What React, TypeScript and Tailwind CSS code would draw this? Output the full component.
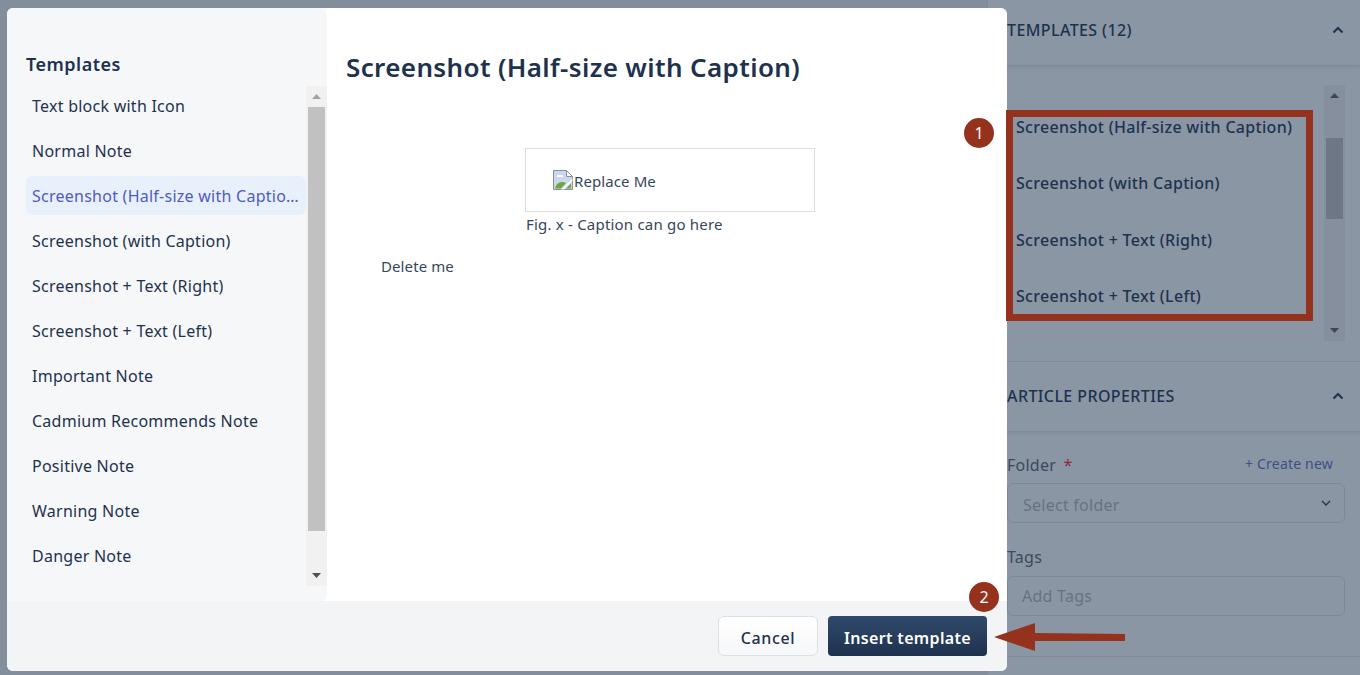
import React from "react";

const templates = [
  "Text block with Icon",
  "Normal Note",
  "Screenshot (Half-size with Caption)",
  "Screenshot (with Caption)",
  "Screenshot + Text (Right)",
  "Screenshot + Text (Left)",
  "Important Note",
  "Cadmium Recommends Note",
  "Positive Note",
  "Warning Note",
  "Danger Note",
];

function Chevron() {
  return (
    <svg width="12" height="8" viewBox="0 0 12 8" fill="none">
      <path d="M1.500 6.500 6 2l4.500 4.500" stroke="#1e324d" strokeWidth="2" />
    </svg>
  );
}

function Arrow({ up, color }: { up?: boolean; color: string }) {
  return (
    <svg width="9" height="5" viewBox="0 0 9 5">
      <path d={up ? "M0 5 4.500 0 9 5Z" : "M0 0 4.500 5 9 0Z"} fill={color} />
    </svg>
  );
}

function BrokenImage() {
  return (
    <svg width="20" height="20" viewBox="0 0 20 20" className="shrink-0">
      <path d="M0.500 0.500H13.500L19.500 6.500V19.500H0.500Z" fill="#c9d7f2" stroke="#8f8f8f" />
      <path d="M13.500 0.500V6.500H19.500Z" fill="#fff" stroke="#8f8f8f" />
      <path d="M2 18.500c1-5 6-8 11-5.500l-5 5.500Z" fill="#6fa83a" />
      <path d="M13 18.500l5-5v5Z" fill="#6fa83a" />
      <path d="M4 5h6v2H4Z" fill="#fff" />
      <path d="M8 19.500 19.500 8.500V11L11 19.500Z" fill="#fff" />
    </svg>
  );
}

function Badge({ n, className }: { n: string; className: string }) {
  return (
    <div className={`absolute w-[30px] h-[30px] rounded-full bg-[#95321e] text-white text-[16px] flex items-center justify-center ${className}`}>
      {n}
    </div>
  );
}

export default function App() {
  return (
    <div
      className="relative w-[1360px] h-[675px] overflow-hidden flex bg-[#838e9d] text-[#1e324d]"
      style={{ fontFamily: '"Noto Sans", sans-serif' }}
    >
      <div className="flex-1" />
      <aside className="w-[373px] h-full bg-[#8b96a5] border-l border-[#838e9d] flex flex-col">
        <div className="h-[66px] pl-[19px] pr-[16px] pb-[6px] flex items-center justify-between border-b border-[#7f8a99] shadow-[0_2px_3px_rgba(0,0,0,0.06)]">
          <span className="text-[16px] font-medium tracking-[0.4px]">TEMPLATES (12)</span>
          <Chevron />
        </div>
        <div className="h-[296px] pl-[28px] pr-[15px] pt-[19px] border-b border-[#7f8a99] flex justify-between">
          <div className="pt-[31px] flex flex-col gap-[34.300px] text-[16px] font-medium tracking-[0.3px] leading-[22px] whitespace-nowrap">
            <div>Screenshot (Half-size with Caption)</div>
            <div>Screenshot (with Caption)</div>
            <div>Screenshot + Text (Right)</div>
            <div>Screenshot + Text (Left)</div>
          </div>
          <div className="w-[21px] h-[256px] bg-[#858f9e] flex flex-col items-center justify-between py-[8px] relative">
            <Arrow up color="#3d4654" />
            <Arrow color="#3d4654" />
            <div className="absolute left-[2px] right-[2px] top-[53px] h-[81px] bg-[#6d7785]" />
          </div>
        </div>
        <div className="h-[70px] pl-[19px] pr-[16px] pb-[2px] flex items-center justify-between border-b border-[#7f8a99] shadow-[0_2px_3px_rgba(0,0,0,0.06)]">
          <span className="text-[16px] font-medium tracking-[0.4px]">ARTICLE PROPERTIES</span>
          <Chevron />
        </div>
        <div className="pr-[15px] pt-[21px] h-[225px] border-b border-[#7f8a99] pl-[19px]">
          <div className="flex justify-between items-center h-[24px] pr-[12px]">
            <span className="text-[16px] tracking-[0.25px] text-[#3a4a5f]">
              Folder <span className="text-[#8a2b3f] ml-[3px]">*</span>
            </span>
            <span className="text-[14px] tracking-[0.2px] text-[#3d4f86] -mt-[4px]">+ Create new</span>
          </div>
          <div className="mt-[6px] h-[40px] border border-[#7c8797] rounded-[6px] pl-[15px] pr-[13px] flex items-center justify-between text-[16px] tracking-[0.25px] text-[#67727f]">
            <span className="pt-[3px]">Select folder</span>
            <svg width="10" height="6" viewBox="0 0 10 6" fill="none">
              <path d="M1 1l4 4 4-4" stroke="#1e324d" strokeWidth="1.300" />
            </svg>
          </div>
          <div className="mt-[22px] h-[24px] flex items-center text-[16px] tracking-[0.25px] text-[#3a4a5f]">Tags</div>
          <div className="mt-[7px] h-[40px] border border-[#7c8797] rounded-[6px] pl-[14px] flex items-center text-[16px] tracking-[0.25px] text-[#67727f]">
            Add Tags
          </div>
        </div>
      </aside>

      <div className="absolute left-[7px] top-[8px] w-[1000px] h-[663px] rounded-[6px] bg-white overflow-hidden flex flex-col">
        <div className="h-[593px] flex">
          <div className="w-[320px] bg-[#f6f7f9] rounded-r-[6px] pl-[19px] pt-[43px]">
            <h2 className="text-[18px] font-semibold tracking-[0.5px] leading-[26px] h-[35px]">Templates</h2>
            <div className="flex h-[500px]">
              <ul className="w-[280px] flex flex-col gap-[6px] text-[16px] tracking-[0.25px] text-[#1e324d]">
                {templates.map((t) => (
                  <li
                    key={t}
                    className={`h-[39px] shrink-0 pl-[6px] pr-[5px] flex items-center rounded-[6px] ${
                      t.includes("Half") ? "bg-[#e8f1fb] text-[#4f5bc4]" : ""
                    }`}
                  >
                    <span className="truncate">{t}</span>
                  </li>
                ))}
              </ul>
              <div className="w-[21px] h-full bg-[#f1f1f1] relative flex flex-col items-center justify-between py-[8px]">
                <Arrow up color="#a3a3a3" />
                <Arrow color="#505050" />
                <div className="absolute left-[2px] right-[2px] top-[21px] h-[424px] bg-[#c1c1c1]" />
              </div>
            </div>
          </div>
          <div className="flex-1 pl-[19px] pt-[41px] text-[#1e324d]">
            <h1 className="text-[26px] font-semibold tracking-[0.37px] leading-[36px]">Screenshot (Half-size with Caption)</h1>
            <div className="ml-[179px] mt-[63px] w-[290px] h-[64px] border border-[#dddddd] pl-[27px] flex items-center text-[15px] tracking-[0.1px] text-[#36465c]">
              <BrokenImage />
              <span className="ml-px pt-[3px]">Replace Me</span>
            </div>
            <div className="ml-[180px] mt-[2px] h-[20px] text-[15px] tracking-[0.2px] leading-[20px] text-[#36465c]">Fig. x - Caption can go here</div>
            <div className="ml-[35px] mt-[22px] text-[15px] tracking-[0.1px] leading-[20px] text-[#36465c]">Delete me</div>
          </div>
        </div>
        <div className="flex-1 bg-[#f3f4f6] flex items-start justify-end gap-[10px] pt-[15px] pr-[20px]">
          <button className="w-[100px] h-[40px] rounded-[6px] border border-[#dde0e5] bg-gradient-to-b from-white to-[#f6f7f9] text-[16px] tracking-[0.6px] font-medium pt-[4px]">
            Cancel
          </button>
          <button className="w-[159px] h-[40px] rounded-[4px] bg-gradient-to-b from-[#30496a] to-[#1e324f] text-white text-[16px] tracking-[0.33px] font-semibold pt-[4px]">
            Insert template
          </button>
        </div>
      </div>

      <div className="absolute left-[1006px] top-[110px] w-[307px] h-[211px] border-[7px] border-[#95321e]" />
      <Badge n="1" className="left-[964px] top-[118px]" />
      <Badge n="2" className="left-[969px] top-[582px]" />
      <svg className="absolute left-[994px] top-[622px]" width="134" height="30" viewBox="0 0 134 30">
        <path d="M0 15 41 1V11L131 12V19L41 19V29Z" fill="#95321e" />
      </svg>
    </div>
  );
}
